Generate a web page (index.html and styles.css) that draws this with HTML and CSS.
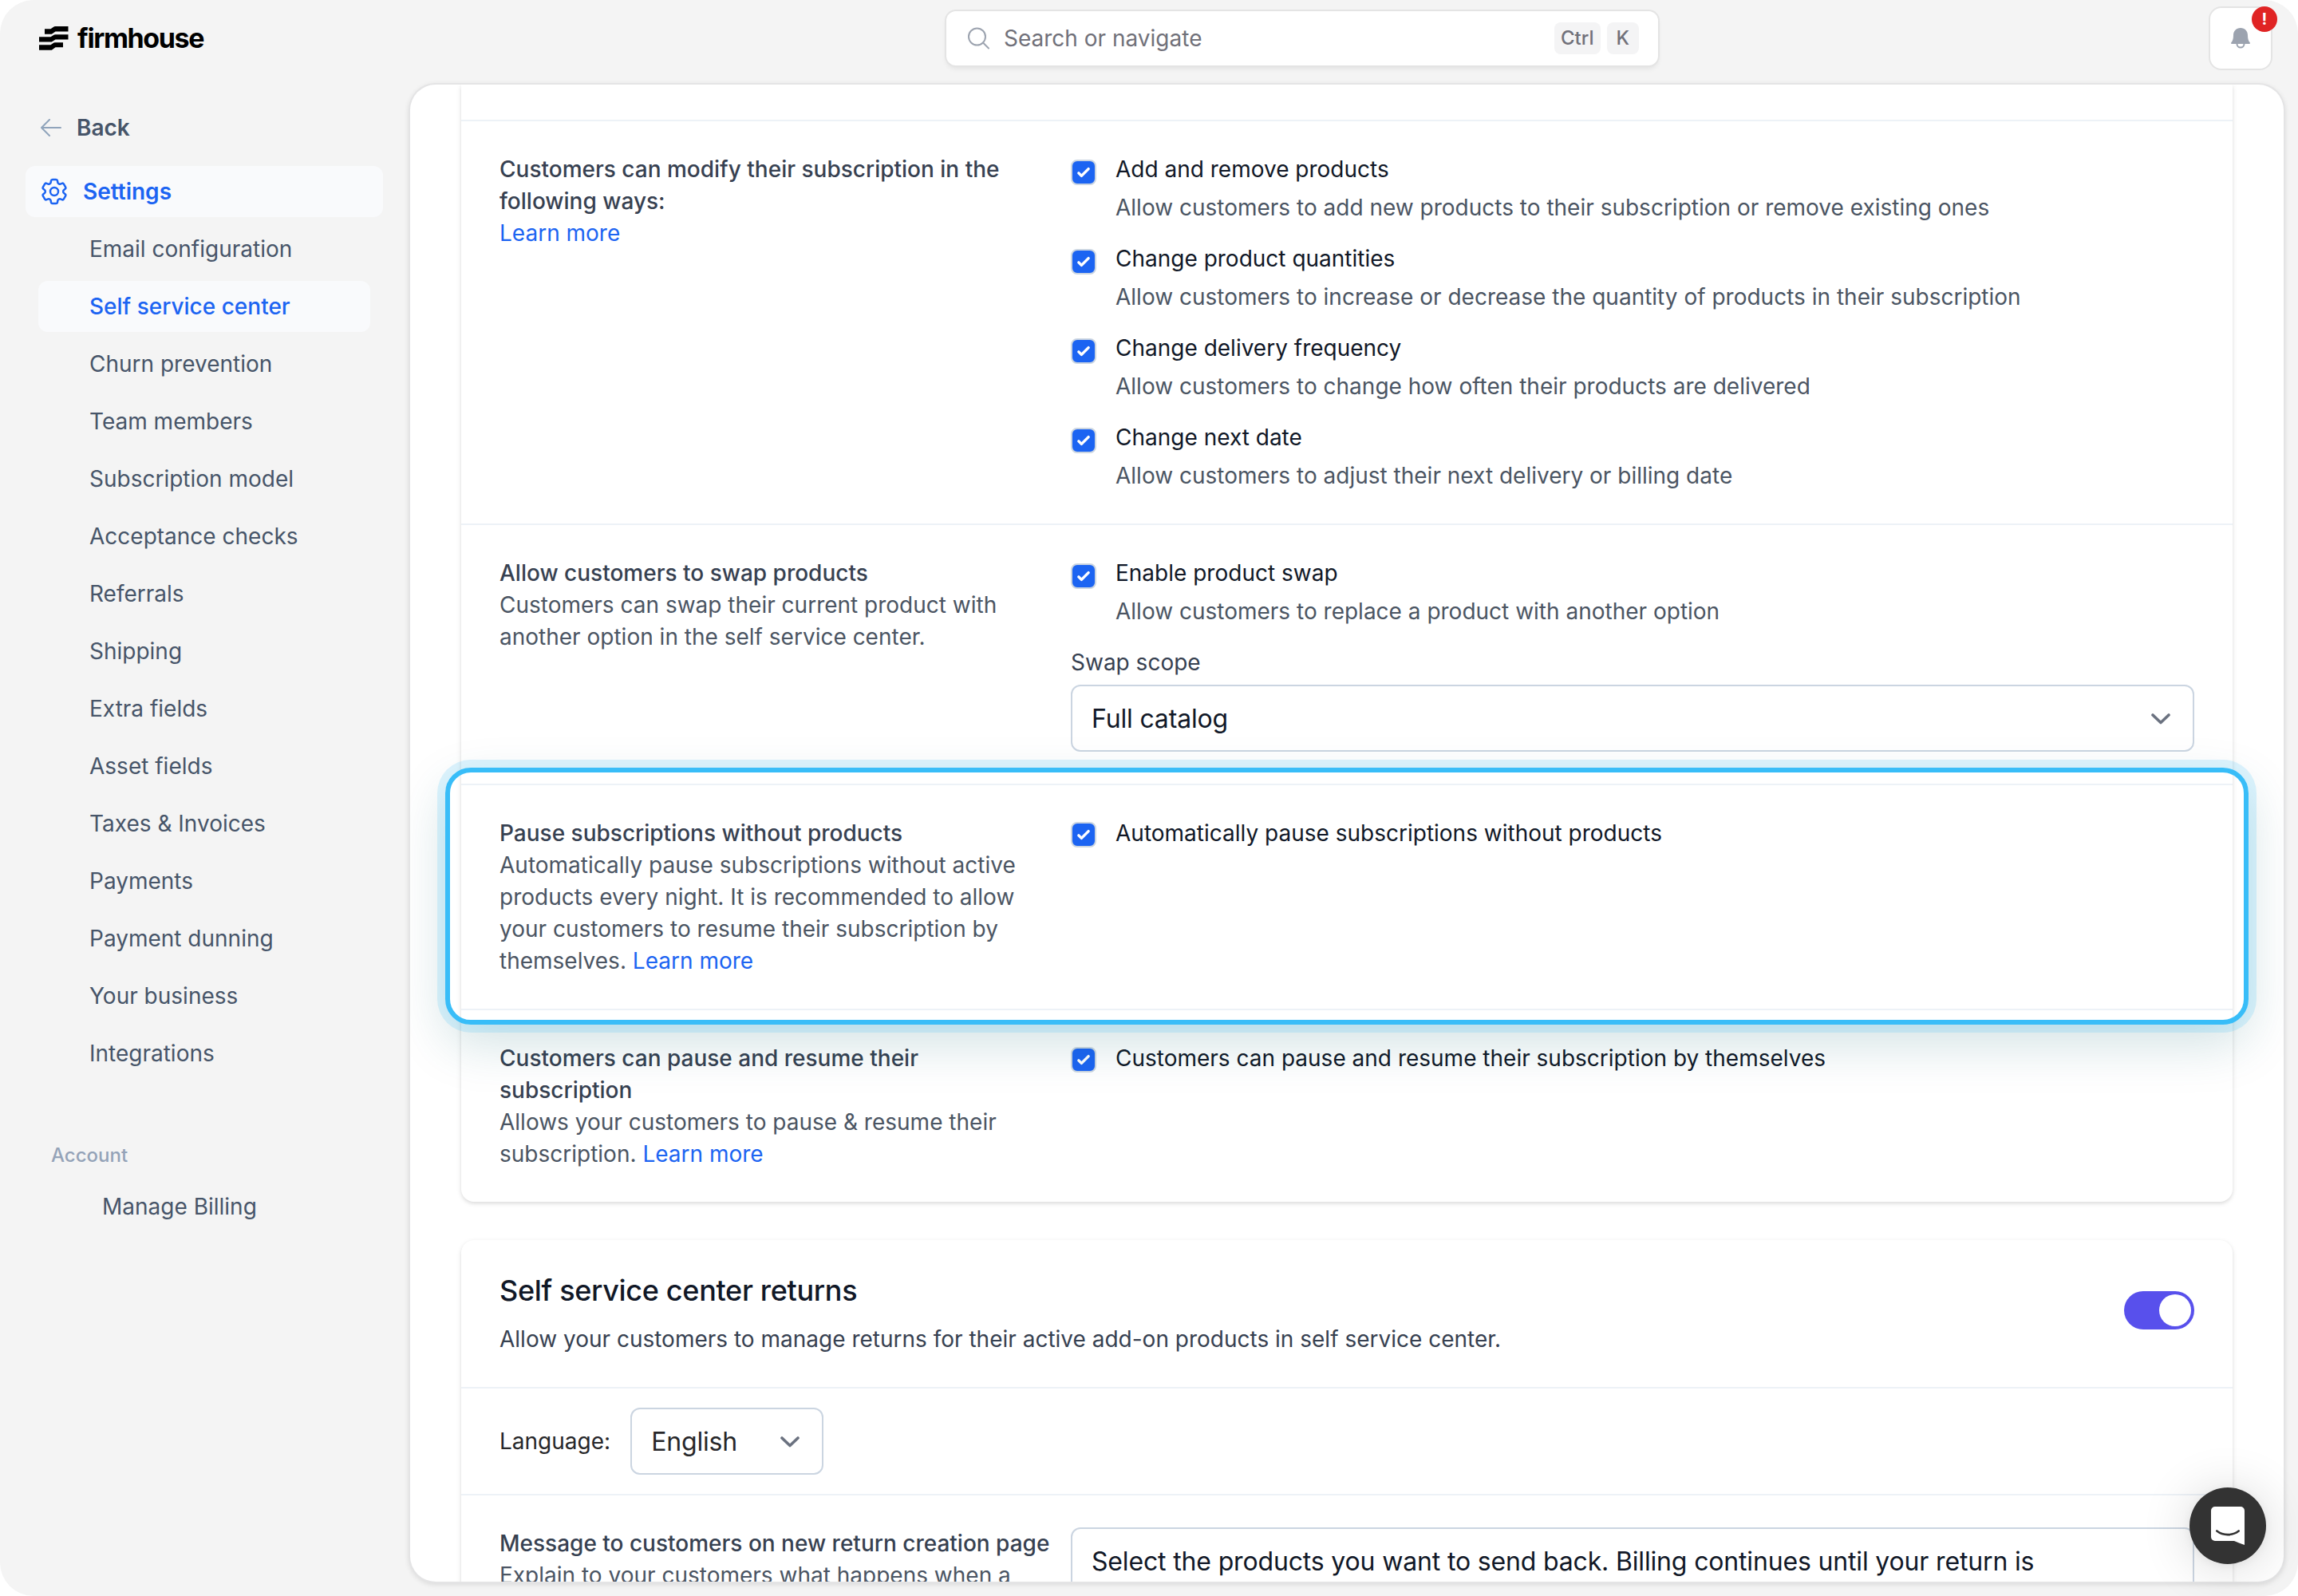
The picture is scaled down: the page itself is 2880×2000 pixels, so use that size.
FILE: index.html
```html
<!DOCTYPE html>
<html lang="en">
<head>
    <meta charset="UTF-8">
    <meta name="viewport" content="width=device-width, initial-scale=1.0">
    <title>Self service center - Firmhouse</title>
    <link rel="stylesheet" href="styles.css">
</head>
<body>
    <div class="app">
        <header class="topbar">
            <a class="logo" href="#">
                <svg width="38" height="30" viewBox="0 0 38 30">
                    <path d="M7 3.3h7.500L18.500.5Q19.200 0 20 0H36.500V6.500H20.500L16.500 9.300Q15.700 9.800 15 9.800H7Z"/>
                    <path d="M0 13.200h14.500L18.500 10.700Q19.200 10.200 20 10.200H36.500V16.500H20.500L16.500 19Q15.700 19.500 15 19.500H0Z"/>
                    <path d="M0 23.200h14.500L18.500 20.600Q19.200 20.200 20 20.200H30V26.300H20.500L16.500 29.200Q15.700 29.800 15 29.800H0Z"/>
                </svg>
                <span class="logo-text">firmhouse</span>
            </a>
            <div class="search">
                <svg width="28" height="28" viewBox="0 0 28 28" fill="none" stroke="#9ca3af" stroke-width="2" stroke-linecap="round">
                    <circle cx="11.500" cy="12" r="10.500"/>
                    <path d="M19 19.500l7 7"/>
                </svg>
                <span class="search-text">Search or navigate</span>
                <kbd>Ctrl</kbd>
                <kbd>K</kbd>
            </div>
            <div class="bell">
                <svg width="24" height="26" viewBox="0 0 24 26">
                    <path fill="#9ca3af" d="M12 0C6.500 0 3 4 3 9c0 4.500-.8 7.200-2.500 9-.8 1 -.4 2 .7 2h21.600c1.100 0 1.500-1 .7-2C21.800 16.200 21 13.500 21 9c0-5-3.500-9-9-9z"/>
                    <path fill="none" stroke="#9ca3af" stroke-width="2" d="M7.500 20a4.500 4.600 0 0 0 9 0"/>
                </svg>
                <span class="badge">!</span>
            </div>
        </header>

        <div class="layout">
            <nav class="sidebar">
                <a class="back" href="#">
                    <svg width="26" height="22" viewBox="0 0 26 22" fill="none" stroke="#90a4bb" stroke-width="2" stroke-linecap="round" stroke-linejoin="round">
                        <path d="M25 11H1M11 1L1 11l10 10"/>
                    </svg>
                    Back
                </a>
                <a class="nav-main" href="#">
                    <svg width="40" height="40" viewBox="0 0 24 24" fill="none" stroke="#1c64f2" stroke-width="1.500" stroke-linecap="round" stroke-linejoin="round">
                        <path d="M9.594 3.940c.090-.542.560-.940 1.110-.940h2.593c.550 0 1.020.398 1.110.940l.213 1.281c.063.374.313.686.645.870.074.040.147.083.220.127.324.196.720.257 1.075.124l1.217-.456a1.125 1.125 0 0 1 1.370.490l1.296 2.247a1.125 1.125 0 0 1-.260 1.431l-1.003.827c-.293.240-.438.613-.431.992a6.759 6.759 0 0 1 0 .255c-.007.378.138.750.430.990l1.005.828c.424.350.534.954.260 1.430l-1.298 2.247a1.125 1.125 0 0 1-1.369.491l-1.217-.456c-.355-.133-.750-.072-1.076.124a6.570 6.570 0 0 1-.220.128c-.331.183-.581.495-.644.869l-.213 1.280c-.090.543-.560.941-1.110.941h-2.594c-.550 0-1.020-.398-1.110-.940l-.213-1.281c-.062-.374-.312-.686-.644-.870a6.520 6.520 0 0 1-.220-.127c-.325-.196-.720-.257-1.076-.124l-1.217.456a1.125 1.125 0 0 1-1.369-.490l-1.297-2.247a1.125 1.125 0 0 1 .260-1.431l1.004-.827c.292-.240.437-.613.430-.992a6.932 6.932 0 0 1 0-.255c.007-.378-.138-.750-.430-.990l-1.004-.828a1.125 1.125 0 0 1-.260-1.430l1.297-2.247a1.125 1.125 0 0 1 1.370-.491l1.216.456c.356.133.751.072 1.076-.124.072-.044.146-.087.220-.128.332-.183.582-.495.644-.869l.214-1.281Z"/>
                        <circle cx="12" cy="12" r="3"/>
                    </svg>
                    Settings
                </a>
                <div class="nav-sub">
                    <a href="#">Email configuration</a>
                    <a href="#" class="active">Self service center</a>
                    <a href="#">Churn prevention</a>
                    <a href="#">Team members</a>
                    <a href="#">Subscription model</a>
                    <a href="#">Acceptance checks</a>
                    <a href="#">Referrals</a>
                    <a href="#">Shipping</a>
                    <a href="#">Extra fields</a>
                    <a href="#">Asset fields</a>
                    <a href="#">Taxes &amp; Invoices</a>
                    <a href="#">Payments</a>
                    <a href="#">Payment dunning</a>
                    <a href="#">Your business</a>
                    <a href="#">Integrations</a>
                </div>
                <div class="nav-heading">Account</div>
                <a class="nav-account" href="#">Manage Billing</a>
            </nav>

            <main class="panel">
                <section class="card card-first">
                    <div class="row-end"></div>
                    <div class="row">
                        <div class="info">
                            <h3>Customers can modify their subscription in the following ways:</h3>
                            <a href="#">Learn more</a>
                        </div>
                        <div class="options">
                            <div class="option">
                                <span class="check"><svg viewBox="0 0 16 16"><path d="M12.207 4.793a1 1 0 0 1 0 1.414l-5 5a1 1 0 0 1-1.414 0l-2-2a1 1 0 0 1 1.414-1.414L6.500 9.086l4.293-4.293a1 1 0 0 1 1.414 0z"/></svg></span>
                                <div>
                                    <div class="option-title">Add and remove products</div>
                                    <p>Allow customers to add new products to their subscription or remove existing ones</p>
                                </div>
                            </div>
                            <div class="option">
                                <span class="check"><svg viewBox="0 0 16 16"><path d="M12.207 4.793a1 1 0 0 1 0 1.414l-5 5a1 1 0 0 1-1.414 0l-2-2a1 1 0 0 1 1.414-1.414L6.500 9.086l4.293-4.293a1 1 0 0 1 1.414 0z"/></svg></span>
                                <div>
                                    <div class="option-title">Change product quantities</div>
                                    <p>Allow customers to increase or decrease the quantity of products in their subscription</p>
                                </div>
                            </div>
                            <div class="option">
                                <span class="check"><svg viewBox="0 0 16 16"><path d="M12.207 4.793a1 1 0 0 1 0 1.414l-5 5a1 1 0 0 1-1.414 0l-2-2a1 1 0 0 1 1.414-1.414L6.500 9.086l4.293-4.293a1 1 0 0 1 1.414 0z"/></svg></span>
                                <div>
                                    <div class="option-title">Change delivery frequency</div>
                                    <p>Allow customers to change how often their products are delivered</p>
                                </div>
                            </div>
                            <div class="option">
                                <span class="check"><svg viewBox="0 0 16 16"><path d="M12.207 4.793a1 1 0 0 1 0 1.414l-5 5a1 1 0 0 1-1.414 0l-2-2a1 1 0 0 1 1.414-1.414L6.500 9.086l4.293-4.293a1 1 0 0 1 1.414 0z"/></svg></span>
                                <div>
                                    <div class="option-title">Change next date</div>
                                    <p>Allow customers to adjust their next delivery or billing date</p>
                                </div>
                            </div>
                        </div>
                    </div>

                    <div class="row">
                        <div class="info">
                            <h3>Allow customers to swap products</h3>
                            <p>Customers can swap their current product with another option in the self service center.</p>
                        </div>
                        <div class="options">
                            <div class="option">
                                <span class="check"><svg viewBox="0 0 16 16"><path d="M12.207 4.793a1 1 0 0 1 0 1.414l-5 5a1 1 0 0 1-1.414 0l-2-2a1 1 0 0 1 1.414-1.414L6.500 9.086l4.293-4.293a1 1 0 0 1 1.414 0z"/></svg></span>
                                <div>
                                    <div class="option-title">Enable product swap</div>
                                    <p>Allow customers to replace a product with another option</p>
                                </div>
                            </div>
                            <div class="field">
                                <div class="field-label">Swap scope</div>
                                <div class="select">
                                    Full catalog
                                    <svg width="24" height="14" viewBox="0 0 24 14"><path d="M2 2l10 9.500L22 2"/></svg>
                                </div>
                            </div>
                        </div>
                    </div>

                    <div class="row highlighted">
                        <div class="info">
                            <h3>Pause subscriptions without products</h3>
                            <p>Automatically pause subscriptions without active products every night. It is recommended to allow your customers to resume their subscription by themselves. <a href="#">Learn more</a></p>
                        </div>
                        <div class="options">
                            <div class="option simple">
                                <span class="check"><svg viewBox="0 0 16 16"><path d="M12.207 4.793a1 1 0 0 1 0 1.414l-5 5a1 1 0 0 1-1.414 0l-2-2a1 1 0 0 1 1.414-1.414L6.500 9.086l4.293-4.293a1 1 0 0 1 1.414 0z"/></svg></span>
                                <div class="option-title">Automatically pause subscriptions without products</div>
                            </div>
                        </div>
                        <div class="highlight"></div>
                    </div>

                    <div class="row">
                        <div class="info">
                            <h3>Customers can pause and resume their subscription</h3>
                            <p>Allows your customers to pause &amp; resume their subscription. <a href="#">Learn more</a></p>
                        </div>
                        <div class="options">
                            <div class="option simple">
                                <span class="check"><svg viewBox="0 0 16 16"><path d="M12.207 4.793a1 1 0 0 1 0 1.414l-5 5a1 1 0 0 1-1.414 0l-2-2a1 1 0 0 1 1.414-1.414L6.500 9.086l4.293-4.293a1 1 0 0 1 1.414 0z"/></svg></span>
                                <div class="option-title">Customers can pause and resume their subscription by themselves</div>
                            </div>
                        </div>
                    </div>
                </section>

                <section class="card">
                    <div class="card-header">
                        <div>
                            <h2>Self service center returns</h2>
                            <p>Allow your customers to manage returns for their active add-on products in self service center.</p>
                        </div>
                        <div class="toggle"><span></span></div>
                    </div>
                    <div class="language">
                        <span>Language:</span>
                        <div class="select">
                            English
                            <svg width="24" height="14" viewBox="0 0 24 14"><path d="M2 2l10 9.500L22 2"/></svg>
                        </div>
                    </div>
                    <div class="row">
                        <div class="info">
                            <h3>Message to customers on new return creation page</h3>
                            <p>Explain to your customers what happens when a</p>
                        </div>
                        <div class="textarea">Select the products you want to send back. Billing continues until your return is</div>
                    </div>
                </section>
            </main>
        </div>

        <div class="chat">
            <svg width="42" height="48" viewBox="0 0 42 48">
                <path fill="#fff" d="M5 0h32a5 5 0 0 1 5 5v43c-5-1.500-9-3.300-13-5H5a5 5 0 0 1-5-5V5a5 5 0 0 1 5-5z"/>
                <path fill="none" stroke="#333" stroke-width="2.600" stroke-linecap="round" d="M7.300 30.500c8 6.200 19.400 6.200 27.400 0"/>
            </svg>
        </div>
    </div>
</body>
</html>
```

FILE: styles.css
```css
* {
    box-sizing: border-box;
}
body {
    margin: 0;
    background-color: #fff;
    font-family: Inter, sans-serif;
    font-size: 28px;
    line-height: 40px;
    color: #111827;
}
a {
    color: #1c64f2;
    text-decoration: none;
}
h2, h3, p {
    margin: 0;
}
svg {
    display: block;
    flex-shrink: 0;
}

.app {
    position: relative;
    display: flex;
    flex-direction: column;
    width: 2880px;
    height: 2000px;
    background-color: #f4f4f4;
    border-radius: 42px;
    overflow: hidden;
}

/* top bar */
.topbar {
    display: grid;
    grid-template-columns: 1186px 892px 1fr;
    align-items: start;
    height: 106px;
    padding-right: 32px;
}
.logo {
    display: flex;
    align-items: center;
    gap: 10px;
    height: 96px;
    padding-left: 49px;
    color: #000;
}
.logo-text {
    font-weight: 700;
    font-size: 34px;
    letter-spacing: -1.4px;
}
.search {
    display: flex;
    align-items: center;
    height: 68px;
    margin-top: 14px;
    padding: 0 24px 0 27px;
    background-color: #fff;
    border-radius: 12px;
    box-shadow: 0 0 0 2px #e4e4e4, 0 4px 6px rgba(0, 0, 0, 0.08);
}
.search-text {
    flex: 1;
    margin-left: 17px;
    color: #71717a;
}
kbd {
    height: 40px;
    margin-left: 8px;
    padding: 0 8px;
    border-radius: 8px;
    background-color: #f4f4f5;
    color: #71717a;
    font-family: inherit;
    font-size: 24px;
    font-weight: 500;
    line-height: 40px;
}
kbd:last-child {
    padding: 0 12px;
}
.bell {
    position: relative;
    display: flex;
    align-items: center;
    justify-content: center;
    justify-self: end;
    width: 80px;
    height: 80px;
    margin-top: 8px;
    background-color: #fff;
    border: 2px solid #e4e4e4;
    border-radius: 16px;
}
.badge {
    position: absolute;
    top: -2px;
    right: -8px;
    width: 32px;
    height: 32px;
    border-radius: 50%;
    background-color: #e02424;
    color: #fff;
    font-size: 20px;
    font-weight: 700;
    line-height: 33px;
    text-align: center;
}

/* sidebar */
.layout {
    display: flex;
    height: 1876px;
}
.sidebar {
    width: 514px;
    padding: 22px 34px 0 32px;
}
.sidebar a {
    display: flex;
    align-items: center;
    height: 64px;
    border-radius: 12px;
    color: #475569;
}
.sidebar .back {
    gap: 19px;
    padding-left: 19px;
    font-weight: 600;
}
.sidebar .nav-main {
    gap: 16px;
    margin-top: 16px;
    padding-left: 16px;
    background-color: #f9fafc;
    color: #1c64f2;
    font-weight: 600;
}
.nav-sub {
    display: flex;
    flex-direction: column;
    gap: 8px;
    padding: 8px 16px 0;
}
.nav-sub a {
    padding-left: 64px;
}
.sidebar .nav-sub .active {
    background-color: #f9fafc;
    color: #1c64f2;
    font-weight: 500;
}
.nav-heading {
    margin-top: 76px;
    padding-left: 32px;
    color: #94a3b8;
    font-size: 24px;
    font-weight: 500;
}
.sidebar .nav-account {
    margin-top: 12px;
    padding-left: 96px;
}

/* content */
.panel {
    width: 2348px;
    padding: 0 64px;
    background-color: #fff;
    border-radius: 32px;
    box-shadow: 0 0 0 2px #e4e4e5, 0 2px 6px 2px rgba(0, 0, 0, 0.1);
    overflow: hidden;
}
.card {
    background-color: #fff;
    border-radius: 16px;
    box-shadow: 0 2px 6px rgba(0, 0, 0, 0.1), 0 2px 4px rgba(0, 0, 0, 0.06);
}
.card-first {
    border-radius: 0 0 16px 16px;
    margin-bottom: 48px;
}
.row-end {
    height: 44px;
}
.row {
    position: relative;
    display: grid;
    grid-template-columns: 692px 1408px;
    column-gap: 24px;
    padding: 40px 48px;
    border-top: 2px solid #edf2f7;
}
.info h3 {
    color: #374151;
    font-size: 28px;
    font-weight: 500;
    line-height: 40px;
}
.info p {
    color: #4b5563;
}
.options {
    display: flex;
    flex-direction: column;
    gap: 24px;
}
.option {
    display: flex;
    align-items: flex-start;
    gap: 24px;
}
.option p {
    margin-top: 8px;
    color: #4b5563;
}
.check {
    width: 32px;
    height: 32px;
    margin-top: 8px;
    border: 2px solid #cbd5e1;
    border-radius: 8px;
    background-color: #1c64f2;
}
.check svg {
    fill: #fff;
}
.simple .check {
    margin-top: 6px;
}
.field-label {
    margin-bottom: 8px;
    color: #374151;
}
.select {
    display: flex;
    align-items: center;
    justify-content: space-between;
    height: 84px;
    padding: 1px 28px 0 24px;
    background-color: #fff;
    border: 2px solid #cbd5e1;
    border-radius: 12px;
    font-size: 32px;
    line-height: 48px;
    letter-spacing: -0.16px;
}
.select path {
    fill: none;
    stroke: #6b7280;
    stroke-width: 3.6;
    stroke-linecap: round;
    stroke-linejoin: round;
}
.highlight {
    position: absolute;
    top: -22px;
    left: -20px;
    right: -20px;
    bottom: -20px;
    border: 6px solid #38bdf8;
    border-radius: 32px;
    box-shadow: 0 0 0 10px rgba(56, 189, 248, 0.17), 0 24px 64px rgba(8, 96, 105, 0.18);
    z-index: 1;
}

/* returns card */
.card-header {
    display: flex;
    justify-content: space-between;
    padding: 40px 48px;
}
.card-header h2 {
    margin-bottom: 16px;
    font-size: 36px;
    font-weight: 500;
    line-height: 47px;
    padding-bottom: 1px;
    letter-spacing: -0.32px;
}
.card-header p {
    color: #374151;
}
.toggle {
    width: 88px;
    height: 48px;
    margin-top: 24px;
    padding: 4px;
    border-radius: 24px;
    background-color: #5850ec;
}
.toggle span {
    display: block;
    width: 40px;
    height: 40px;
    margin-left: auto;
    border-radius: 50%;
    background-color: #fff;
}
.language {
    display: flex;
    align-items: center;
    gap: 25px;
    padding: 24px 48px;
    border-top: 2px solid #edf2f7;
    color: #27272a;
}
.language .select {
    width: 242px;
}
.textarea {
    height: 180px;
    padding: 17px 24px;
    border: 2px solid #cbd5e1;
    border-radius: 12px;
    font-size: 32px;
    line-height: 48px;
    letter-spacing: -0.16px;
}

/* chat launcher */
.chat {
    position: absolute;
    right: 40px;
    bottom: 40px;
    display: flex;
    align-items: center;
    justify-content: center;
    width: 96px;
    height: 96px;
    border-radius: 50%;
    background-color: #333;
    box-shadow: 0 2px 12px rgba(0, 0, 0, 0.06), 0 4px 64px rgba(0, 0, 0, 0.16);
    z-index: 2;
}
```
